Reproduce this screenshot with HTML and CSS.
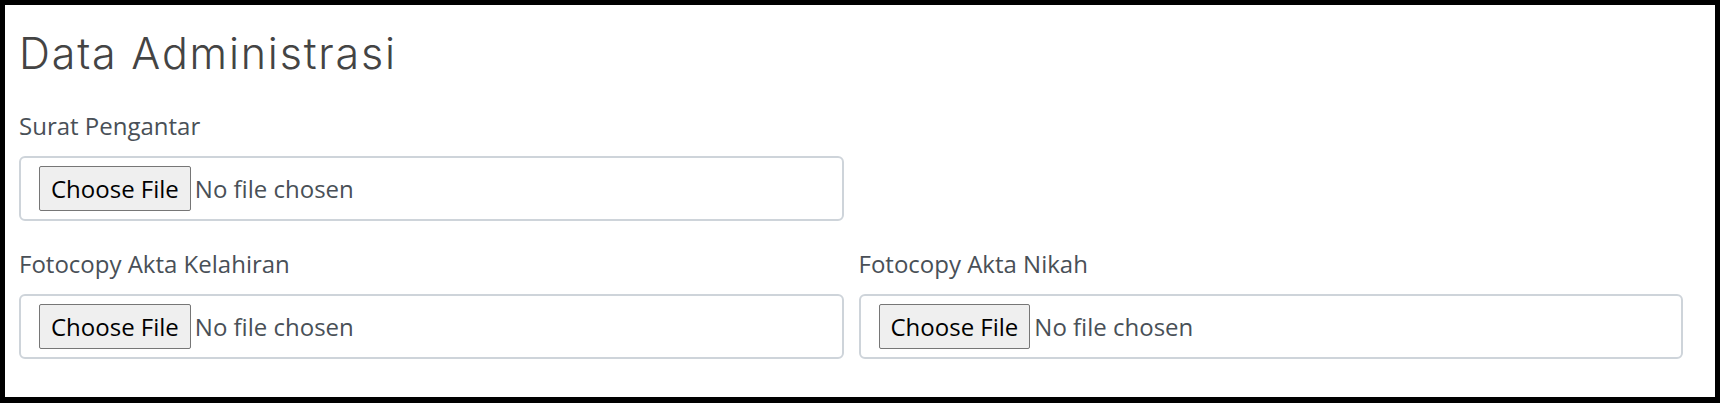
FILE: index.html
```html
<!DOCTYPE html>
<html lang="id">
<head>
<meta charset="utf-8">
<title>Data Administrasi</title>
<link rel="stylesheet" href="styles.css">
</head>
<body>
<div class="frame">
  <h2 class="title">Data Administrasi</h2>
  <div class="row">
    <div class="group">
      <label class="label" for="surat">Surat Pengantar</label>
      <input class="form-control" type="file" id="surat">
    </div>
  </div>
  <div class="row">
    <div class="group">
      <label class="label" for="akta-lahir">Fotocopy Akta Kelahiran</label>
      <input class="form-control" type="file" id="akta-lahir">
    </div>
    <div class="group">
      <label class="label" for="akta-nikah">Fotocopy Akta Nikah</label>
      <input class="form-control" type="file" id="akta-nikah">
    </div>
  </div>
</div>
</body>
</html>
```

FILE: styles.css
```css
html, body {
  margin: 0;
  padding: 0;
  background: #000;
}

.frame {
  box-sizing: border-box;
  width: 1720px;
  height: 403px;
  border: 5px solid #000;
  border-bottom-width: 6px;
  background: #fff;
  padding: 23px 32px 0 14px;
  font-family: "Open Sans", "Noto Sans", sans-serif;
}

.title {
  margin: 0 0 28px 0;
  font-family: "Inter", "Open Sans", sans-serif;
  font-weight: 300;
  font-size: 43px;
  letter-spacing: 1.8px;
  line-height: 1.2;
  color: #444;
}

.row {
  display: grid;
  grid-template-columns: 1fr 1fr;
  column-gap: 15px;
  margin-bottom: 25px;
}

.group {
  display: flex;
  flex-direction: column;
}

.label {
  font-size: 24px;
  line-height: 36px;
  color: #495057;
  margin-bottom: 12px;
}

.form-control {
  box-sizing: border-box;
  display: block;
  width: 100%;
  margin: 0;
  padding: 8px 18px;
  border: 2px solid #ced4da;
  border-radius: 6px;
  background: #fff;
  font-family: "Open Sans", "Noto Sans", sans-serif;
  font-size: 24px;
  color: #495057;
}

.form-control::file-selector-button {
  font-family: "Open Sans", "Noto Sans", sans-serif;
  font-size: 24px;
  color: #000;
  background: #efefef;
  border: 1px solid #767676;
  border-radius: 2px;
  padding: 5px 11px;
  margin: 0 4px 0 0;
}
```
